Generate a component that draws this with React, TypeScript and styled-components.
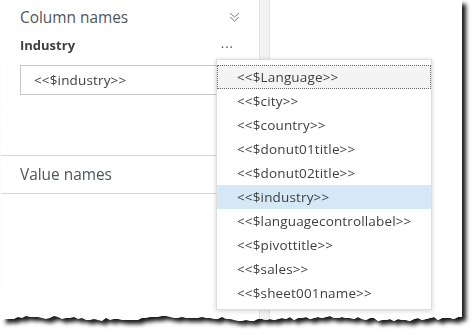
import React from 'react';
import styled, { createGlobalStyle } from 'styled-components';

const GlobalStyle = createGlobalStyle`
  html, body {
    margin: 0;
    padding: 0;
    background: #fff;
  }
  body {
    font-family: 'Open Sans', 'Noto Sans', Arial, sans-serif;
    color: #545b64;
  }
`;

// jagged torn-paper bottom edge
const buildTornEdge = () => {
  const pts: string[] = ['0 0', '100% 0'];
  let seed = 7;
  const rnd = () => {
    seed = (seed * 9301 + 49297) % 233280;
    return seed / 233280;
  };
  const bottom = 320;
  for (let x = 462; x >= 0; x -= 4) {
    const y = bottom - Math.round(rnd() * 3 + Math.sin(x / 23) * 1.2);
    pts.push(`${x}px ${y}px`);
  }
  return `polygon(${pts.join(', ')})`;
};

const TORN = buildTornEdge();

const Stage = styled.div`
  width: 472px;
  height: 335px;
  overflow: hidden;
`;

const Sheet = styled.div`
  width: 462px;
  height: 324px;
  filter: drop-shadow(4px 4px 2px rgba(0, 0, 0, 0.9));
`;

const Paper = styled.div`
  position: relative;
  display: flex;
  width: 100%;
  height: 100%;
  background: #fff;
  clip-path: ${TORN};
`;

const LeftPanel = styled.div`
  width: 259px;
  display: flex;
  flex-direction: column;
`;

const Divider = styled.div`
  width: 9px;
  background: #f2f3f3;
  border-left: 1px solid #e4e4e4;
  border-right: 1px solid #e4e4e4;
`;

const RightArea = styled.div`
  flex: 1;
  background: #fff;
`;

const HeaderRow = styled.div`
  height: 34px;
  display: flex;
  align-items: center;
  justify-content: space-between;
  padding: 0 19px 0 20px;
  font-size: 15.4px;
  color: #4f555c;
`;

const FieldRow = styled.div`
  height: 22px;
  display: flex;
  align-items: center;
  justify-content: space-between;
  padding: 0 25px 0 20px;
  font-size: 13px;
  font-weight: 700;
  color: #404040;
`;

const Dots = styled.span`
  font-weight: 400;
  font-size: 13px;
  color: #555;
  letter-spacing: 1px;
  margin-top: -4px;
`;

const TextBox = styled.div`
  margin: 9px 14px 60px 20px;
  height: 28px;
  border: 1px solid #c9c9c9;
  display: flex;
  align-items: center;
  padding-left: 13px;
  font-size: 13.5px;
  letter-spacing: 0.15px;
  color: #3f3f3f;
`;

const Section = styled.div`
  height: 37px;
  border-top: 1px solid #d6d6d6;
  border-bottom: 1px solid #d6d6d6;
  display: flex;
  align-items: center;
  padding-left: 20px;
  font-size: 15.4px;
  color: #4f555c;
`;

const Menu = styled.ul`
  position: absolute;
  left: 216px;
  top: 59px;
  width: 214px;
  margin: 0;
  padding: 5px 0 4px;
  list-style: none;
  background: #fff;
  border: 1px solid #dedede;
  box-shadow: 0 1px 5px rgba(0, 0, 0, 0.18);
`;

const Item = styled.li<{ $selected?: boolean; $focused?: boolean }>`
  height: 24px;
  box-sizing: border-box;
  display: flex;
  align-items: center;
  padding-left: 20px;
  font-size: 13.5px;
  letter-spacing: 0.15px;
  color: #3f3f3f;
  background: ${p => (p.$selected ? '#d4e9f5' : p.$focused ? '#f4f4f4' : 'transparent')};
  outline: ${p => (p.$focused ? '1px dotted #666' : 'none')};
  outline-offset: -1px;
`;

const ChevronDown = () => (
  <svg width="11" height="10" viewBox="0 0 11 10" fill="none" stroke="#7a7a7a" strokeWidth="1">
    <path d="M1 1 L5.5 5 L10 1" />
    <path d="M1 5 L5.5 9 L10 5" />
  </svg>
);

const options = [
  'Language',
  'city',
  'country',
  'donut01title',
  'donut02title',
  'industry',
  'languagecontrollabel',
  'pivottitle',
  'sales',
  'sheet001name',
];

const App = () => (
  <>
    <GlobalStyle />
    <Stage>
      <Sheet>
        <Paper>
          <LeftPanel>
            <HeaderRow>
              Column names
              <ChevronDown />
            </HeaderRow>
            <FieldRow>
              Industry
              <Dots>...</Dots>
            </FieldRow>
            <TextBox>{'<<$industry>>'}</TextBox>
            <Section>Value names</Section>
          </LeftPanel>
          <Divider />
          <RightArea />
          <Menu>
            {options.map((o, i) => (
              <Item key={o} $focused={i === 0} $selected={o === 'industry'}>
                {`<<$${o}>>`}
              </Item>
            ))}
          </Menu>
        </Paper>
      </Sheet>
    </Stage>
  </>
);

export default App;
